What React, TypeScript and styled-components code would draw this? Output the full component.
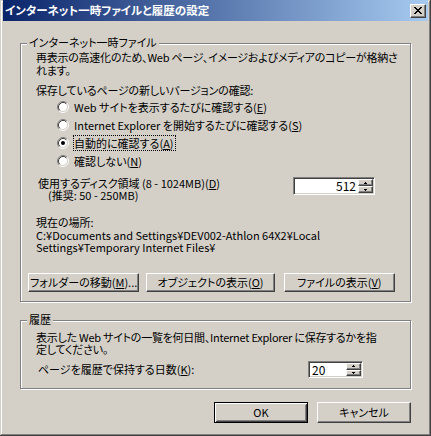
import React from "react";
import styled, { createGlobalStyle, css } from "styled-components";

const Global = createGlobalStyle`
  html, body { margin: 0; padding: 0; background: #d4d0c8; }
  body {
    font-family: "Noto Sans CJK JP", "Noto Sans", sans-serif;
    font-size: 11px;
    color: #000;
  }
  * { box-sizing: border-box; }
`;

const Window = styled.div`
  width: 431px;
  height: 436px;
  display: flex;
  flex-direction: column;
  padding: 0 3px 3px 3px;
  background: #d4d0c8;
  box-shadow: inset -1px -1px #404040, inset 1px 1px #d4d0c8,
    inset -2px -2px #808080, inset 2px 2px #fff;
  font-feature-settings: "palt";
  overflow: hidden;
`;

const TitleBar = styled.div`
  height: 21px;
  display: flex;
  align-items: center;
  padding: 0 2px 0 2px;
  background: linear-gradient(to right, #0a246a, #a6caf0);
  color: #fff;
  font-weight: bold;
  font-size: 11.5px;
  line-height: 13px;
`;

const TitleText = styled.span`
  white-space: nowrap;
`;

const raised = css`
  border: 1px solid;
  border-color: #fff #404040 #404040 #fff;
  box-shadow: inset -1px -1px #808080, inset 1px 1px #d4d0c8;
  background: #d4d0c8;
`;

const CloseBtn = styled.div`
  ${raised};
  margin-left: auto;
  width: 16px;
  height: 14px;
  display: flex;
  align-items: center;
  justify-content: center;
`;

const Body = styled.div`
  flex: 1;
  display: flex;
  flex-direction: column;
  padding: 0 17px;
`;

const Group = styled.div<{ $mt: number; $pt: number; $pb: number }>`
  position: relative;
  margin-top: ${(p) => p.$mt}px;
  padding: ${(p) => p.$pt}px 15px ${(p) => p.$pb}px 15px;
  border: 1px solid #808080;
  box-shadow: inset 1px 1px #fff, 1px 1px #fff;
`;

const Legend = styled.div`
  position: absolute;
  top: -8px;
  left: 6px;
  padding: 0 2px;
  background: #d4d0c8;
  line-height: 13px;
  white-space: nowrap;
`;

const Text = styled.div<{ $lh?: number; $mt?: number; $ml?: number; $ls?: number }>`
  line-height: ${(p) => p.$lh ?? 13}px;
  margin-top: ${(p) => p.$mt ?? 0}px;
  margin-left: ${(p) => p.$ml ?? 0}px;
  letter-spacing: ${(p) => p.$ls ?? 0}px;
  white-space: nowrap;
`;

const Acc = styled.u`
  text-decoration: underline;
  text-underline-offset: 1px;
`;

const RadioList = styled.div`
  margin-top: 1px;
  margin-left: 21px;
  display: flex;
  flex-direction: column;
`;

const RadioRow = styled.div`
  height: 18px;
  display: flex;
  align-items: center;
  gap: 4px;
`;

const RadioLabel = styled.span<{ $focus?: boolean }>`
  border: 1px dotted ${(p) => (p.$focus ? "#000" : "transparent")};
  line-height: 14px;
  padding-right: 1px;
  white-space: nowrap;
`;

const SpinRow = styled.div<{ $cols: string; $mt: number }>`
  display: grid;
  grid-template-columns: ${(p) => p.$cols};
  align-items: center;
  margin-top: ${(p) => p.$mt}px;
`;

const Spin = styled.div<{ $w: number; $h: number }>`
  width: ${(p) => p.$w}px;
  height: ${(p) => p.$h}px;
  align-self: start;
  display: flex;
  background: #fff;
  border: 1px solid;
  border-color: #808080 #fff #fff #808080;
  box-shadow: inset 1px 1px #404040, inset -1px -1px #d4d0c8;
  padding: 2px;
`;

const SpinValue = styled.div<{ $align: string }>`
  flex: 1;
  text-align: ${(p) => p.$align};
  line-height: 12px;
  padding: 0 2px 0 1px;
  font-size: 12px;
`;

const SpinButtons = styled.div`
  width: 15px;
  display: flex;
  flex-direction: column;
  margin: -1px -1px -1px 0;
`;

const SpinBtn = styled.div`
  ${raised};
  flex: 1;
  display: flex;
  align-items: center;
  justify-content: center;
`;

const ButtonRow = styled.div<{ $mt: number; $ml?: number; $justify?: string }>`
  display: flex;
  justify-content: ${(p) => p.$justify ?? "flex-start"};
  margin-top: ${(p) => p.$mt}px;
  margin-left: ${(p) => p.$ml ?? 0}px;
`;

const Button = styled.div<{ $w: number; $h: number; $ml?: number; $default?: boolean }>`
  width: ${(p) => p.$w}px;
  height: ${(p) => p.$h}px;
  margin-left: ${(p) => p.$ml ?? 0}px;
  display: flex;
  align-items: center;
  justify-content: center;
  white-space: nowrap;
  line-height: 13px;
  ${(p) =>
    p.$default
      ? css`
          border: 1px solid #000;
          background: #d4d0c8;
          box-shadow: inset 1px 1px #fff, inset -1px -1px #404040,
            inset 2px 2px #d4d0c8, inset -2px -2px #808080;
        `
      : raised}
`;

const Radio = ({ checked }: { checked?: boolean }) => (
  <svg width="12" height="12" viewBox="0 0 12 12">
    <circle cx="6" cy="6" r="4.5" fill="#fff" />
    <path d="M2.11 9.89 A5.5 5.5 0 0 1 9.89 2.11" stroke="#808080" fill="none" />
    <path d="M9.89 2.11 A5.5 5.5 0 0 1 2.11 9.89" stroke="#fff" fill="none" />
    <path d="M2.82 9.18 A4.5 4.5 0 0 1 9.18 2.82" stroke="#404040" fill="none" />
    <path d="M9.18 2.82 A4.5 4.5 0 0 1 2.82 9.18" stroke="#d4d0c8" fill="none" />
    {checked && <circle cx="6" cy="6" r="2" fill="#000" />}
  </svg>
);

const Arrow = ({ up }: { up?: boolean }) => (
  <svg width="3" height="2" viewBox="0 0 3 2">
    {up ? <path d="M1 0h1v1h1v1H0V1h1z" fill="#000" /> : <path d="M0 0h3v1H2v1H1V1H0z" fill="#000" />}
  </svg>
);

const SpinBox = ({ w, h, value, align }: { w: number; h: number; value: string; align: string }) => (
  <Spin $w={w} $h={h}>
    <SpinValue $align={align}>{value}</SpinValue>
    <SpinButtons>
      <SpinBtn>
        <Arrow up />
      </SpinBtn>
      <SpinBtn>
        <Arrow />
      </SpinBtn>
    </SpinButtons>
  </Spin>
);

export default function App() {
  return (
    <>
      <Global />
      <Window>
        <TitleBar>
          <TitleText>インターネット一時ファイルと履歴の設定</TitleText>
          <CloseBtn>
            <svg width="8" height="7" viewBox="0 0 8 7">
              <path
                d="M0 0h2v1h1v1h2V1h1V0h2v1H7v1H6v1H5v1h1v1h1v1h1v1H6V6H5V5H3v1H2v1H0V6h1V5h1V4h1V3H2V2H1V1H0z"
                fill="#000"
              />
            </svg>
          </CloseBtn>
        </TitleBar>
        <Body>
          <Group $mt={22} $pt={7} $pb={9}>
            <Legend>インターネット一時ファイル</Legend>
            <Text $ls={-0.25}>
              再表示の高速化のため、Web ページ、イメージおよびメディアのコピーが格納さ
              <br />
              れます。
            </Text>
            <Text $mt={7} $ls={-0.15}>
              保存しているページの新しいバージョンの確認:
            </Text>
            <RadioList>
              <RadioRow>
                <Radio />
                <RadioLabel>
                  Web サイトを表示するたびに確認する(<Acc>E</Acc>)
                </RadioLabel>
              </RadioRow>
              <RadioRow>
                <Radio />
                <RadioLabel>
                  Internet Explorer を開始するたびに確認する(<Acc>S</Acc>)
                </RadioLabel>
              </RadioRow>
              <RadioRow>
                <Radio checked />
                <RadioLabel $focus>
                  自動的に確認する(<Acc>A</Acc>)
                </RadioLabel>
              </RadioRow>
              <RadioRow>
                <Radio />
                <RadioLabel>
                  確認しない(<Acc>N</Acc>)
                </RadioLabel>
              </RadioRow>
            </RadioList>
            <SpinRow $cols="257px 82px" $mt={7}>
              <div>
                <Text $lh={12} $ml={2}>
                  使用するディスク領域 (8 - 1024MB)(<Acc>D</Acc>)
                </Text>
                <Text $lh={12} $ml={12}>
                  (推奨: 50 - 250MB)
                </Text>
              </div>
              <SpinBox w={82} h={18} value="512" align="right" />
            </SpinRow>
            <Text $mt={15}>現在の場所:</Text>
            <Text $lh={12}>
              C:¥Documents and Settings¥DEV002-Athlon 64X2¥Local
              <br />
              Settings¥Temporary Internet Files¥
            </Text>
            <ButtonRow $mt={20} $ml={-8}>
              <Button $w={113} $h={19}>
                フォルダーの移動(<Acc>M</Acc>)...
              </Button>
              <Button $w={130} $h={19} $ml={7}>
                オブジェクトの表示(<Acc>O</Acc>)
              </Button>
              <Button $w={113} $h={19} $ml={9}>
                ファイルの表示(<Acc>V</Acc>)
              </Button>
            </ButtonRow>
          </Group>
          <Group $mt={18} $pt={10} $pb={10}>
            <Legend>履歴</Legend>
            <Text $lh={12} $ls={-0.25}>
              表示した Web サイトの一覧を何日間、Internet Explorer に保存するかを指
              <br />
              定してください。
            </Text>
            <SpinRow $cols="272px 55px" $mt={6}>
              <Text $ml={2}>
                ページを履歴で保持する日数(<Acc>K</Acc>):
              </Text>
              <SpinBox w={55} h={17} value="20" align="left" />
            </SpinRow>
          </Group>
          <ButtonRow $mt={13} $justify="flex-end">
            <Button $w={94} $h={21} $default>
              OK
            </Button>
            <Button $w={94} $h={21} $ml={9}>
              キャンセル
            </Button>
          </ButtonRow>
        </Body>
      </Window>
    </>
  );
}
